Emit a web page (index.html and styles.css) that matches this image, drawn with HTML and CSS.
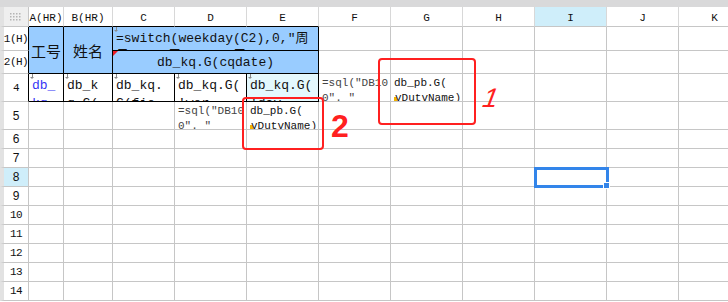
FILE: index.html
```html
<!DOCTYPE html>
<html lang="zh">
<head>
    <meta charset="UTF-8">
    <title>Sheet</title>
    <link rel="stylesheet" href="styles.css">
</head>
<body>
    <div class="page">
        <div class="topbar"></div>
        <div class="sheet" id="sheet">
            <!-- column headers -->
            <div class="cell corner">
                <svg width="12" height="8" viewBox="0 0 12 8">
                    <g fill="#b4b4b4">
                        <rect x="0" y="0" width="1.5" height="1.5"/><rect x="3" y="0" width="1.5" height="1.5"/><rect x="6" y="0" width="1.5" height="1.5"/><rect x="9" y="0" width="1.5" height="1.5"/>
                        <rect x="0" y="3" width="1.5" height="1.5"/><rect x="3" y="3" width="1.5" height="1.5"/><rect x="6" y="3" width="1.5" height="1.5"/><rect x="9" y="3" width="1.5" height="1.5"/>
                        <rect x="0" y="6" width="1.5" height="1.5"/><rect x="3" y="6" width="1.5" height="1.5"/><rect x="6" y="6" width="1.5" height="1.5"/><rect x="9" y="6" width="1.5" height="1.5"/>
                    </g>
                </svg>
            </div>
            <div class="cell colh under-blk">A(HR)</div>
            <div class="cell colh under-blk">B(HR)</div>
            <div class="cell colh under-blk">C</div>
            <div class="cell colh under-blk">D</div>
            <div class="cell colh under-blk">E</div>
            <div class="cell colh">F</div>
            <div class="cell colh">G</div>
            <div class="cell colh">H</div>
            <div class="cell colh active">I</div>
            <div class="cell colh">J</div>
            <div class="cell colh">K</div>

            <!-- row 1 -->
            <div class="cell rh edge-blk">1(H)</div>
            <div class="cell head blk span-r2 cjk">工号</div>
            <div class="cell head blk span-r2 cjk">姓名</div>
            <div class="cell head blk span-c3 formula"><span class="mark"></span>=switch(weekday(C2),0,"周日",1,"周一",2,"周二")</div>
            <div class="cell"></div><div class="cell"></div><div class="cell"></div><div class="cell"></div><div class="cell"></div><div class="cell"></div>

            <!-- row 2 -->
            <div class="cell rh edge-blk">2(H)</div>
            <div class="cell head blk span-c3 centered"><span class="comment"></span>db_kq.G(cqdate)</div>
            <div class="cell"></div><div class="cell"></div><div class="cell"></div><div class="cell"></div><div class="cell"></div><div class="cell"></div>

            <!-- row 4 -->
            <div class="cell rh edge-blk">4</div>
            <div class="cell blk field blue"><span class="mark"></span>db_<br>kq.</div>
            <div class="cell blk field"><span class="mark"></span>db_k<br>q.G(</div>
            <div class="cell blk field"><span class="mark"></span>db_kq.<br>G(fie</div>
            <div class="cell blk field"><span class="mark"></span>db_kq.G(<br>'wor</div>
            <div class="cell blk field tinted"><span class="mark"></span>db_kq.G(<br>'day</div>
            <div class="cell small grey">=sql("DB10<br>0". "</div>
            <div class="cell small">db_pb.G(<br><span class="flag"></span>vDutvName)</div>
            <div class="cell"></div><div class="cell"></div><div class="cell"></div><div class="cell"></div>

            <!-- row 5 -->
            <div class="cell rh sans">5</div>
            <div class="cell"></div><div class="cell"></div><div class="cell"></div>
            <div class="cell small grey">=sql("DB10<br>0". "</div>
            <div class="cell small">db_pb.G(<br><span class="flag"></span>vDutvName)</div>
            <div class="cell"></div><div class="cell"></div><div class="cell"></div><div class="cell"></div><div class="cell"></div><div class="cell"></div>
            <!-- rows 6-14 are added by the script below -->
        </div>

        <!-- annotations drawn over the sheet -->
        <div class="note-box box-one"></div>
        <div class="note-num num-one">1</div>
        <div class="note-box box-two"></div>
        <div class="note-num num-two">2</div>
        <div class="selection"><span class="handle"></span></div>
    </div>
    <script>
        const sheet = document.getElementById('sheet');
        for (let r = 6; r <= 14; r++) {
            const head = document.createElement('div');
            head.className = 'cell rh' + (r < 10 ? ' sans' : '') + (r === 8 ? ' active' : '');
            head.textContent = r;
            sheet.appendChild(head);
            for (let c = 0; c < 11; c++) {
                const cell = document.createElement('div');
                cell.className = 'cell';
                sheet.appendChild(cell);
            }
        }
    </script>
</body>
</html>
```

FILE: styles.css
```css
body {
    margin: 0;
    background-color: #ffffff;
    font-family: "Liberation Mono", monospace;
    color: #111111;
    overflow: hidden;
}
.page {
    position: relative;
    width: 728px;
    height: 302px;
    overflow: hidden;
}
.topbar {
    height: 7px;
    background-color: #d9d9da;
}
.sheet {
    display: grid;
    grid-template-columns: 29px 35px 49px 62px repeat(8, 72px);
    grid-template-rows: 20px 24px 23px 28px 28px repeat(9, 19px);
}
.cell {
    box-sizing: border-box;
    border-right: 1px solid #c6c6c6;
    border-bottom: 1px solid #c6c6c6;
    overflow: hidden;
    position: relative;
}
.corner {
    background-color: #efefef;
    border-left: 4px solid #e2e2e2;
    display: flex;
    align-items: center;
    justify-content: center;
}
.colh {
    display: flex;
    align-items: center;
    justify-content: center;
    font-size: 11px;
    border-right-color: #d8d8d8;
    padding-top: 2px;
}
.colh.under-blk {
    border-bottom-color: #000000;
}
.active {
    background-color: #cfeefa;
}
.rh {
    border-left: 4px solid #e2e2e2;
    display: flex;
    align-items: center;
    justify-content: center;
    font-size: 11px;
    letter-spacing: -0.5px;
}
.rh.sans {
    font-family: "Liberation Sans", sans-serif;
    font-size: 12px;
    letter-spacing: 0;
}
.rh.edge-blk {
    border-right-color: #000000;
}
.blk {
    border-right-color: #000000;
    border-bottom-color: #000000;
}
.head {
    background-color: #99ccff;
}
.span-r2 {
    grid-row: span 2;
}
.span-c3 {
    grid-column: span 3;
}
.cjk {
    font-family: "Noto Sans CJK SC", sans-serif;
    font-size: 15px;
    display: flex;
    align-items: center;
    justify-content: center;
}
.formula {
    font-size: 13px;
    line-height: 17px;
    padding: 3px 0 0 3px;
    word-break: break-all;
}
.formula, .centered, .field {
    font-family: "Liberation Mono", "Noto Sans CJK SC", monospace;
}
.centered {
    font-size: 13px;
    display: flex;
    align-items: center;
    justify-content: center;
    padding-top: 1px;
}
.field {
    font-size: 13px;
    line-height: 18px;
    padding: 3px 0 0 3px;
    white-space: nowrap;
}
.field.blue {
    color: #3535f5;
}
.field.tinted {
    background-color: #e4f8fd;
}
.small {
    font-size: 11px;
    line-height: 15px;
    padding: 2px 0 0 3px;
    white-space: nowrap;
}
.small.grey {
    color: #444444;
}
.mark {
    position: absolute;
    top: 0;
    left: 1px;
    width: 5px;
    height: 5px;
}
.mark::before {
    content: "";
    position: absolute;
    left: 2px;
    top: 0;
    width: 1px;
    height: 4px;
    background-color: #8a8a8a;
}
.mark::after {
    content: "";
    position: absolute;
    left: 0;
    top: 3px;
    border-left: 2.5px solid transparent;
    border-right: 2.5px solid transparent;
    border-top: 2px solid #8a8a8a;
}
.comment {
    position: absolute;
    top: 0;
    left: 0;
    border-top: 5px solid #ee1c25;
    border-right: 5px solid transparent;
}
.flag {
    display: inline-block;
    width: 3px;
    height: 5px;
    background-color: #f0b400;
    margin-right: -2px;
    vertical-align: -1px;
}
.note-box {
    position: absolute;
    box-sizing: border-box;
    border: 2.5px solid #ff2020;
    border-radius: 4px;
}
.box-one {
    left: 378px;
    top: 58px;
    width: 98px;
    height: 67px;
}
.box-two {
    left: 242px;
    top: 97px;
    width: 82px;
    height: 53px;
}
.note-num {
    position: absolute;
    color: #ff2020;
    font-family: "Liberation Sans", sans-serif;
    font-weight: bold;
}
.num-one {
    left: 483px;
    top: 83px;
    font-size: 27px;
    font-weight: normal;
    font-style: italic;
    transform: skewX(-10deg);
}
.num-two {
    left: 331px;
    top: 108px;
    font-size: 32px;
}
.selection {
    position: absolute;
    left: 534px;
    top: 167px;
    width: 75px;
    height: 21px;
    box-sizing: border-box;
    border: 3px solid #3385ea;
}
.handle {
    position: absolute;
    right: -4px;
    bottom: -4px;
    width: 5px;
    height: 5px;
    background-color: #3385ea;
    border: 1px solid #ffffff;
}
```
